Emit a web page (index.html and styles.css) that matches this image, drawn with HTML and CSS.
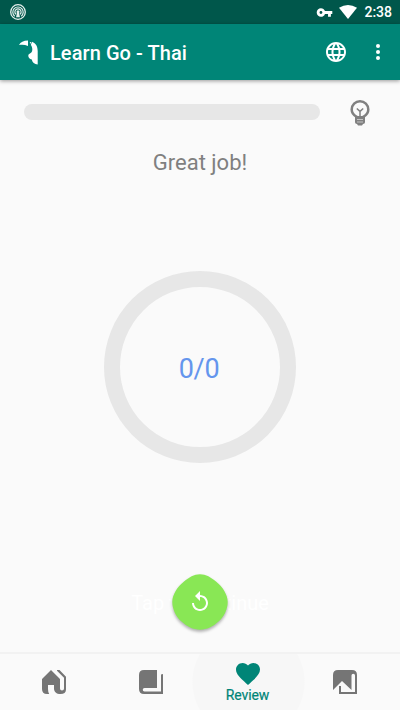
FILE: index.html
```html
<!DOCTYPE html>
<html lang="en">
<head>
<meta charset="utf-8">
<title>Learn Go - Thai</title>
<link rel="stylesheet" href="styles.css">
</head>
<body>
<div class="status">
  <svg class="cast" width="16" height="16" viewBox="0 0 16 16" fill="none" stroke="currentColor"><circle cx="8" cy="8" r="7.3" stroke-width="1.3"/><path d="M4.7 12.2a5.2 5.2 0 1 1 6.6 0M6 10.3a3.1 3.1 0 1 1 4 0" stroke-width="1.2"/><circle cx="8" cy="7.8" r="1.5" fill="currentColor" stroke="none"/><path d="M6.9 9h2.2l.8 4.2H6.1z" fill="currentColor" stroke="none"/></svg>
  <svg class="key" width="17" height="17" viewBox="0 0 24 24" fill="currentColor"><path d="M12.65 10C11.83 7.67 9.61 6 7 6c-3.31 0-6 2.69-6 6s2.69 6 6 6c2.61 0 4.83-1.67 5.65-4H17v4h4v-4h2v-4H12.65zM7 14c-1.1 0-2-.9-2-2s.9-2 2-2 2 .9 2 2-.9 2-2 2z"/></svg>
  <svg class="wifi" width="18" height="14" viewBox="0 0 18 14" fill="currentColor"><path d="M0 2.8Q9-2.6 18 2.8L9 14z"/></svg>
  <span class="time">2:38</span>
</div>
<header class="appbar">
  <svg class="logo" width="20" height="26" viewBox="0 0 20 26" fill="currentColor"><path d="M0 6C1.5 3 4.500 1.500 9 1.500V7C6 5.600 3 5.500 0 6z"/><path d="M13 2.800C17 4.300 18.700 7.700 18.700 12V25.500C15.500 25.300 13.200 23.500 12.800 20.500C10.500 20 9.100 18.500 9.300 16.200C9.400 14.500 13.300 14.800 13.300 10.500C13.300 8.500 12.700 7 11.800 6z"/><circle cx="11.500" cy="3.800" r=".7"/></svg>
  <h1>Learn Go - Thai</h1>
  <svg class="globe" width="24" height="24" viewBox="0 0 24 24" fill="currentColor"><path d="M11.99 2C6.47 2 2 6.48 2 12s4.47 10 9.99 10C17.52 22 22 17.52 22 12S17.52 2 11.99 2zm6.93 6h-2.95c-.32-1.25-.78-2.45-1.38-3.56 1.84.63 3.37 1.91 4.33 3.56zM12 4.04c.83 1.2 1.48 2.53 1.91 3.96h-3.82c.43-1.43 1.08-2.76 1.91-3.96zM4.26 14C4.1 13.36 4 12.69 4 12s.1-1.36.26-2h3.38c-.08.66-.14 1.32-.14 2s.06 1.34.14 2H4.26zm.82 2h2.95c.32 1.25.78 2.45 1.38 3.56-1.84-.63-3.37-1.9-4.33-3.56zm2.95-8H5.08c.96-1.66 2.49-2.93 4.33-3.56C8.81 5.55 8.35 6.75 8.03 8zM12 19.96c-.83-1.2-1.48-2.53-1.91-3.96h3.82c-.43 1.43-1.08 2.76-1.91 3.96zM14.34 14H9.66c-.09-.66-.16-1.32-.16-2s.07-1.35.16-2h4.68c.09.65.16 1.32.16 2s-.07 1.34-.16 2zm.25 5.56c.6-1.11 1.06-2.31 1.38-3.56h2.95c-.96 1.65-2.49 2.93-4.33 3.56zM16.36 14c.08-.66.14-1.32.14-2s-.06-1.34-.14-2h3.38c.16.64.26 1.31.26 2s-.1 1.36-.26 2h-3.38z"/></svg>
  <svg class="more" width="24" height="24" viewBox="0 0 24 24" fill="currentColor"><circle cx="12" cy="6" r="2"/><circle cx="12" cy="12" r="2"/><circle cx="12" cy="18" r="2"/></svg>
</header>
<main>
  <div class="progress">
    <div class="track"></div>
    <svg width="20" height="26" viewBox="0 0 20 26" fill="none" stroke="#808080"><path d="M6.3 17.2V16.6C3.3 15 1.7 12.6 1.7 9.6a8.3 8.3 0 0 1 16.6 0c0 3-1.6 5.4-4.6 7v.6z" stroke-width="2.5"/><path d="M5 17h10v5.3q0 1.7-2 1.7l-1 1.5H8L7 24q-2 0-2-1.7z" fill="#808080" stroke="none"/><path d="M7 19.5h6M7 22h6" stroke="#ccc" stroke-width=".9"/><path d="M6.8 8.5L10 11.4l3.2-2.9M10 11v6" stroke-width="1.5"/></svg>
  </div>
  <h2>Great job!</h2>
  <div class="ring"><span>0/0</span></div>
  <div class="continue">
    <p>Tap to continue</p>
    <svg class="fab" width="56" height="56" viewBox="0 0 56 56"><path d="M28 .3C34 .3 39 3.500 44 7.500C51 13 55.700 21 55.700 28C55.700 35 52 43 46.500 47.500C41 52.500 35 55.700 28 55.700C21 55.700 15 52.500 9.500 47.500C4 43 .3 35 .3 28C.3 21 5 13 12 7.500C17 3.500 22 .3 28 .3z" fill="#89e755"/><path d="M12 5V1L7 6l5 5V7c3.31 0 6 2.69 6 6s-2.69 6-6 6-6-2.69-6-6H4c0 4.42 3.58 8 8 8s8-3.58 8-8-3.58-8-8-8z" fill="#fff" transform="translate(16 16)"/></svg>
  </div>
</main>
<nav>
  <div class="tab"><svg width="24" height="24" viewBox="0 0 24 24" fill="currentColor"><path d="M9 0L18 9V18.5a2 2 0 0 0 4 0V7.8L15 .8V0H17.5L24 6.7V19.5C24 22.5 22 24 18.5 24C14.5 24 12 22 12 18.5V15H6V19Q6 22 7.2 24H5Q0 24 0 19V9z"/></svg></div>
  <div class="tab"><svg width="24" height="24" viewBox="0 0 24 24" fill="currentColor"><path d="M5 0H18V18H5.5a1.75 1.75 0 0 0 0 3.5H22V4.5L24 4V24H5Q0 24 0 19V5Q0 0 5 0z"/></svg></div>
  <div class="tab active"><svg width="24" height="22" viewBox="2 3 20 18.35" preserveAspectRatio="none" fill="currentColor"><path d="M12 21.35l-1.45-1.32C5.4 15.36 2 12.28 2 8.5 2 5.42 4.42 3 7.5 3c1.74 0 3.41.81 4.5 2.09C13.09 3.81 14.76 3 16.5 3 19.58 3 22 5.42 22 8.5c0 3.78-3.4 6.86-8.55 11.54L12 21.35z"/></svg><span>Review</span></div>
  <div class="tab"><svg width="24" height="24" viewBox="0 0 24 24" fill="currentColor"><path d="M5 0H19Q24 0 24 5V24H6V16H8V22H22V5.5a1.75 1.75 0 0 0-3.5 0V20L9 11L0 20V5Q0 0 5 0z"/></svg></div>
</nav>
</body>
</html>
```

FILE: styles.css
```css
* { box-sizing: border-box; }
body {
  margin: 0;
  width: 400px;
  height: 710px;
  display: flex;
  flex-direction: column;
  overflow: hidden;
  background: #fafafa;
  font-family: Roboto, sans-serif;
}
svg { display: block; flex: none; }
h1, h2, p { margin: 0; }
.status {
  height: 24px;
  flex: none;
  display: flex;
  align-items: center;
  padding: 0 8px 0 10px;
  background: #00574b;
  color: #fff;
}
.cast { color: #e5efed; }
.key { margin-left: auto; }
.wifi { margin: 0 7px 0 6px; }
.time { font-size: 14px; font-weight: 500; line-height: 24px; }
.appbar {
  height: 56px;
  flex: none;
  display: flex;
  align-items: center;
  padding: 0 10px 0 19px;
  background: #008577;
  color: #fff;
  box-shadow: 0 1px 4px rgba(0, 0, 0, .4);
}
.appbar h1 { margin: 2px 0 0 11px; font-size: 20px; font-weight: 500; line-height: 24px; letter-spacing: .07px; white-space: nowrap; }
.logo { margin-top: -1px; }
.globe { margin-left: auto; }
.more { margin-left: 18px; }
main { flex: 1; display: flex; flex-direction: column; align-items: center; }
.progress {
  width: 400px;
  height: 26px;
  margin-top: 20px;
  padding: 0 30px 0 24px;
  display: flex;
  align-items: center;
  justify-content: space-between;
}
.track { width: 296px; height: 16px; margin-bottom: 2px; border-radius: 8px; background: #e7e7e7; }
h2 { margin-top: 23px; font-size: 22px; font-weight: 400; line-height: 28px; color: #808080; }
.ring {
  width: 192px;
  height: 192px;
  margin-top: 94px;
  border: 16px solid #e7e7e7;
  border-radius: 50%;
  display: flex;
  align-items: center;
  justify-content: center;
  color: #6495ed;
  font-size: 27px;
  letter-spacing: -.3px;
}
.ring span { margin: 3px 2px 0 0; line-height: 32px; }
.continue { margin-top: 111px; height: 56px; display: grid; place-items: center; }
.continue p, .fab { grid-area: 1 / 1; }
.continue p { padding-top: 2px; color: #fff; font-size: 20px; line-height: 24px; }
.fab { filter: drop-shadow(0 2px 1.5px rgba(0, 0, 0, .3)); }
nav {
  height: 58px;
  flex: none;
  display: flex;
  padding: 0 7px 0 5px;
  border-top: 2px solid #f2f2f2;
  overflow: hidden;
  color: #757575;
  background: radial-gradient(circle at 248.5px 28px, #f7f7f7 55.5px, #fafafa 56.5px);
}
.tab { flex: 1; display: flex; flex-direction: column; align-items: center; padding-top: 16px; }
.tab.active { padding-top: 9px; color: #008577; }
.tab span { margin-top: 1px; font-size: 14px; font-weight: 400; line-height: 18px; letter-spacing: -.1px; -webkit-text-stroke: .2px #008577; }
```
